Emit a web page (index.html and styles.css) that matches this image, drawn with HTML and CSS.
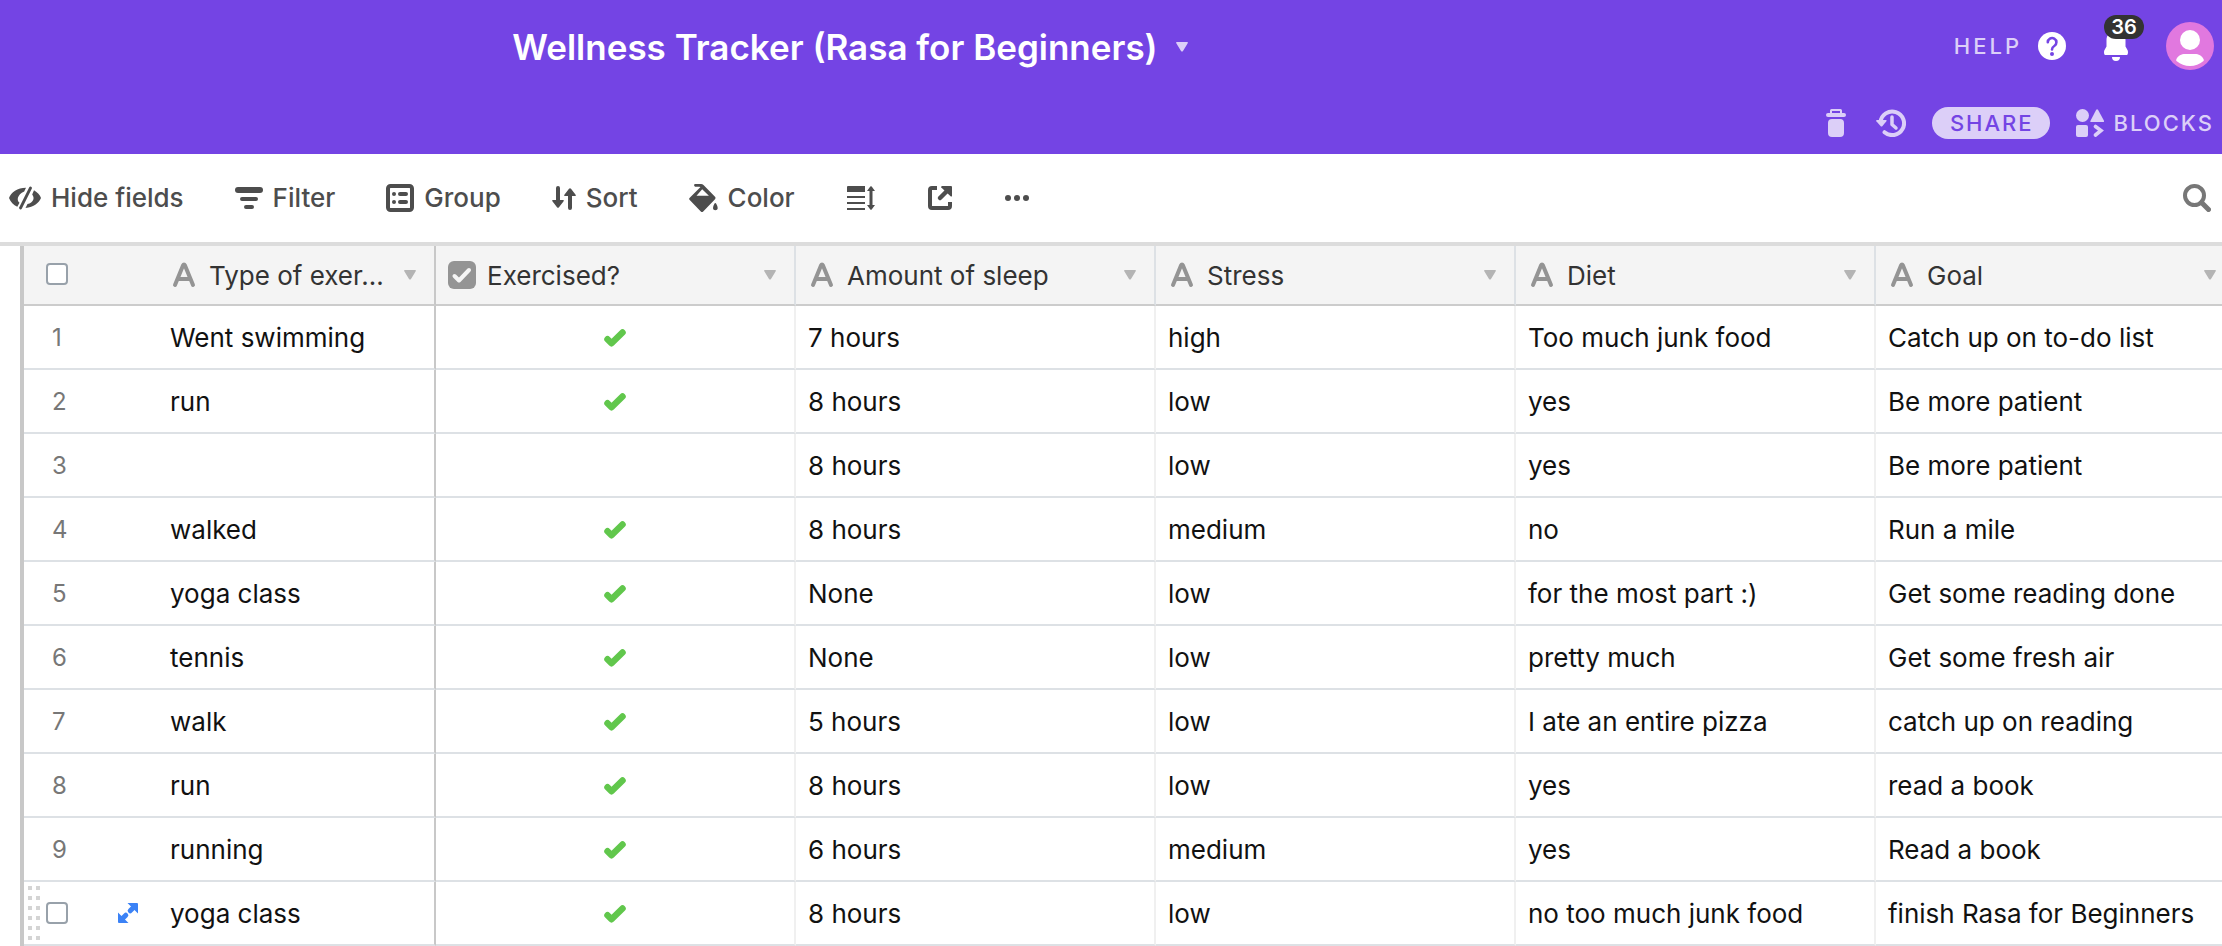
FILE: index.html
```html
<!DOCTYPE html>
<html lang="en">
<head>
<meta charset="utf-8">
<meta name="viewport" content="width=device-width, initial-scale=1">
<title>Wellness Tracker (Rasa for Beginners)</title>
<link rel="stylesheet" href="styles.css">
</head>
<body>
<svg class="sprite" aria-hidden="true">
  <symbol id="text-field" viewBox="0 0 28 26"><path d="M5 23 13 3.500q1-2 2 0L23 23M8.500 17h11" fill="none" stroke="currentColor" stroke-width="4" stroke-linecap="round" stroke-linejoin="round"/></symbol>
  <symbol id="check-field" viewBox="0 0 28 28"><rect width="28" height="28" rx="6" fill="currentColor"/><path d="m6.500 15 4.500 4.500L21 9" fill="none" stroke="#f5f5f5" stroke-width="4" stroke-linecap="round" stroke-linejoin="round"/></symbol>
  <symbol id="caret" viewBox="0 0 12 10"><path d="M1 0h10q1.500 0 .700 1.300L7 9q-1 1.200-2 0L.300 1.300Q-.500 0 1 0Z" fill="currentColor"/></symbol>
  <symbol id="check" viewBox="0 0 22 18"><path d="m3.500 10.300 4 4L18.500 3.500" fill="none" stroke="currentColor" stroke-width="6.500" stroke-linecap="round" stroke-linejoin="round"/></symbol>
</svg>

<header class="topbar">
  <div class="title-area">
    <button class="title" type="button"><h1>Wellness Tracker (Rasa for Beginners)</h1><svg class="caret" width="12" height="10"><use href="#caret"/></svg></button>
  </div>
  <nav class="account" aria-label="Account">
    <a class="help" href="#help">HELP
      <svg width="28" height="28" viewBox="0 0 28 28"><circle cx="14" cy="14" r="14" fill="#fff"/><path d="M9.800 10.300a4.300 4.300 0 1 1 6.500 3.700c-1.600 1-2.300 1.700-2.300 3.500" fill="none" stroke="#7444e4" stroke-width="2.600" stroke-linecap="round"/><circle cx="14" cy="22" r="2" fill="#7444e4"/></svg></a>
    <button class="bell" type="button" aria-label="Notifications">
      <svg width="24" height="30" viewBox="0 0 24 30"><path d="M12 0C6 0 2.500 4 2.500 9v6.500L.500 19c-.900 1.600-.500 5 .700 5h21.600c1.200 0 1.600-3.400.700-5l-2-3.500V9C21.500 4 18 0 12 0ZM8 26h8a4 4 0 0 1-8 0Z" fill="#fff"/></svg>
      <span class="badge">36</span>
    </button>
    <button class="avatar" type="button" aria-label="Profile">
      <svg width="48" height="48" viewBox="0 0 48 48"><circle cx="24" cy="24" r="24" fill="#e178df"/><circle cx="24" cy="18" r="10" fill="#fff"/><path d="M10.300 37.500C12 33.500 15.500 32 19 32h10c3.500 0 7 1.500 8.700 5.500.300.700 0 1.300-.500 1.800C33.500 42.500 29 44 24 44s-9.500-1.500-13.200-4.700c-.500-.500-.800-1.100-.5-1.800Z" fill="#fff"/></svg>
    </button>
  </nav>
  <nav class="base-tools" aria-label="Base tools">
    <button type="button" aria-label="Trash"><svg width="20" height="28" viewBox="0 0 20 28"><path d="M2 4h2V1.500Q4 0 5.500 0h9Q16 0 16 1.500V4h2a2 2 0 0 1 0 4H2a2 2 0 0 1 0-4Zm4 0h8V2H6v2ZM2 14q0-4 4-4h8q4 0 4 4v10q0 4-4 4H6q-4 0-4-4Z" fill="currentColor" fill-rule="evenodd"/></svg></button>
    <button type="button" aria-label="History"><svg width="30" height="28" viewBox="0 0 30 28"><path d="M4.500 13A11.800 11.800 0 1 1 8.500 23.200" fill="none" stroke="currentColor" stroke-width="4" stroke-linecap="round"/><path d="M1 11h9q1 .300.400 1.300L6.500 17q-1 1-2 0L.300 12.300Q-.300 11.300 1 11Z" fill="currentColor"/><path d="M16 8v7.500l4 3.500" fill="none" stroke="currentColor" stroke-width="3.500" stroke-linecap="round" stroke-linejoin="round"/></svg></button>
    <button class="share" type="button">SHARE</button>
    <button class="blocks" type="button"><svg width="28" height="28" viewBox="0 0 28 28"><g fill="currentColor"><circle cx="6.500" cy="6.500" r="6.500"/><path d="M20.200.800q1-1.200 1.800 0l6 11q.500 1.200-.500 1.200H15q-1 0-.500-1.200Z"/><rect y="16" width="12" height="12" rx="2"/></g><path d="m19.500 17.500 5.500 4-5.500 4.500" fill="none" stroke="currentColor" stroke-width="3.600" stroke-linecap="round"/></svg>BLOCKS</button>
  </nav>
</header>

<div class="toolbar" role="toolbar" aria-label="View options">
  <button type="button"><svg width="32" height="24" viewBox="0 0 32 24"><path d="M21.500 2 11.500 22" stroke="currentColor" stroke-width="2.800" stroke-linecap="round"/><path d="M17 1.800C8.500 1.800 2 6.500 0 12c1.500 4 4.500 7 8.300 8.800l2.200-4.100C7.500 14.500 8 9 15.200 5.600ZM25 4.200c3.500 2 6 4.800 7 7.800-2 5-7 9-15.500 10l2-4c6-1.500 7.500-6 4.700-9.600Z" fill="currentColor"/></svg>Hide fields</button>
  <button type="button"><svg width="28" height="22" viewBox="0 0 28 22"><path d="M7 12h14M11 20h6" stroke="currentColor" stroke-width="4" stroke-linecap="round"/><path d="M3 3h22" stroke="currentColor" stroke-width="6" stroke-linecap="round"/></svg>Filter</button>
  <button type="button"><svg width="28" height="28" viewBox="0 0 28 28"><rect x="2" y="2" width="24" height="24" rx="2.500" fill="none" stroke="currentColor" stroke-width="4"/><path d="M14 10h6M14 18h6" stroke="currentColor" stroke-width="4" stroke-linecap="round"/><circle cx="8" cy="10" r="2" fill="currentColor"/><circle cx="8" cy="18" r="2" fill="currentColor"/></svg>Group</button>
  <button type="button"><svg width="24" height="24" viewBox="0 0 24 24"><path d="M6 2v16M18 22V6" stroke="currentColor" stroke-width="4" stroke-linecap="round"/><path d="M.800 14h10.400q1.200 0 .400 1.300L7 21.200q-1 1-2 0L.400 15.300Q-.400 14 .800 14ZM12.800 10h10.400q1.200 0 .400-1.300L19 2.800q-1-1-2 0l-4.600 5.900q-.800 1.300.400 1.300Z" fill="currentColor"/></svg>Sort</button>
  <button type="button"><svg width="29" height="28" viewBox="0 0 29 28"><path d="M.500 14 11.500 3 10.200 2.800H6Q4 .800 6 0h6q1.500 0 2.500 1L26 12.800q1 1.200 0 2.400L14.200 27.400q-1.200 1-2.400 0L.500 15.800Q-.200 14.800.500 14ZM7.500 11.800h12.400L13.200 5.200Z" fill="currentColor" fill-rule="evenodd"/><path d="M25.500 19.500q1-1.200 1.600 0 1.600 2.700 1.600 4.500c0 3-4.700 3-4.700 0q0-1.800 1.500-4.500Z" fill="currentColor"/></svg>Color</button>
  <button class="icon-only" type="button" aria-label="Row height"><svg width="28" height="24" viewBox="0 0 28 24"><path d="M1 0h17v6H0V1q0-1 1-1ZM0 10h18v2H0ZM0 16h18v2H0ZM0 22h18v2H0ZM22.500 5v14H20l3.300 4.500q.7.700 1.400 0L28 19h-2.500V5H28L24.700.500q-.7-.7-1.400 0L20 5Z" fill="currentColor"/></svg></button>
  <button class="icon-only" type="button" aria-label="Share view"><svg width="24" height="24" viewBox="0 0 24 24"><path d="M9 2H4Q2 2 2 4v16q0 2 2 2h16q2 0 2-2v-4" fill="none" stroke="currentColor" stroke-width="4"/><path d="m12 12 7-7" stroke="currentColor" stroke-width="4.500" stroke-linecap="round"/><path d="M14 0h9q1 0 1 1v9q-.500 1-1.400.200L13.300 1.500Q12.800.300 14 0Z" fill="currentColor"/></svg></button>
  <button class="icon-only" type="button" aria-label="More"><svg width="24" height="6" viewBox="0 0 24 6" fill="currentColor"><circle cx="3" cy="3" r="3"/><circle cx="12" cy="3" r="3"/><circle cx="21" cy="3" r="3"/></svg></button>
  <button class="search" type="button" aria-label="Search"><svg width="28" height="28" viewBox="0 0 28 28" fill="none" stroke="currentColor"><circle cx="11.500" cy="11.500" r="9.500" stroke-width="4"/><path d="m18.500 18.500 7 7" stroke-width="5" stroke-linecap="round"/></svg></button>
</div>

<main class="sheet">
<table class="grid">
  <colgroup><col class="c-index"><col class="c-primary"><col class="c-field"><col class="c-field"><col class="c-field"><col class="c-field"><col class="c-field"></colgroup>
  <thead><tr>
    <th class="index"><input type="checkbox" aria-label="Select all rows"></th>
    <th class="primary"><div class="field"><svg width="28" height="26"><use href="#text-field"/></svg><span>Type of exer...</span><button type="button" aria-label="Field menu"><svg class="caret" width="12" height="10"><use href="#caret"/></svg></button></div></th>
    <th><div class="field"><svg width="28" height="28"><use href="#check-field"/></svg><span>Exercised?</span><button type="button" aria-label="Field menu"><svg class="caret" width="12" height="10"><use href="#caret"/></svg></button></div></th>
    <th><div class="field"><svg width="28" height="26"><use href="#text-field"/></svg><span>Amount of sleep</span><button type="button" aria-label="Field menu"><svg class="caret" width="12" height="10"><use href="#caret"/></svg></button></div></th>
    <th><div class="field"><svg width="28" height="26"><use href="#text-field"/></svg><span>Stress</span><button type="button" aria-label="Field menu"><svg class="caret" width="12" height="10"><use href="#caret"/></svg></button></div></th>
    <th><div class="field"><svg width="28" height="26"><use href="#text-field"/></svg><span>Diet</span><button type="button" aria-label="Field menu"><svg class="caret" width="12" height="10"><use href="#caret"/></svg></button></div></th>
    <th><div class="field"><svg width="28" height="26"><use href="#text-field"/></svg><span>Goal</span><button type="button" aria-label="Field menu"><svg class="caret" width="12" height="10"><use href="#caret"/></svg></button></div></th>
  </tr></thead>
  <tbody>
    <tr><td class="index">1</td><td class="primary">Went swimming</td><td class="tick"><svg width="22" height="18"><use href="#check"/></svg></td><td>7 hours</td><td>high</td><td>Too much junk food</td><td>Catch up on to-do list</td></tr>
    <tr><td class="index">2</td><td class="primary">run</td><td class="tick"><svg width="22" height="18"><use href="#check"/></svg></td><td>8 hours</td><td>low</td><td>yes</td><td>Be more patient</td></tr>
    <tr><td class="index">3</td><td class="primary"></td><td class="tick"></td><td>8 hours</td><td>low</td><td>yes</td><td>Be more patient</td></tr>
    <tr><td class="index">4</td><td class="primary">walked</td><td class="tick"><svg width="22" height="18"><use href="#check"/></svg></td><td>8 hours</td><td>medium</td><td>no</td><td>Run a mile</td></tr>
    <tr><td class="index">5</td><td class="primary">yoga class</td><td class="tick"><svg width="22" height="18"><use href="#check"/></svg></td><td>None</td><td>low</td><td>for the most part :)</td><td>Get some reading done</td></tr>
    <tr><td class="index">6</td><td class="primary">tennis</td><td class="tick"><svg width="22" height="18"><use href="#check"/></svg></td><td>None</td><td>low</td><td>pretty much</td><td>Get some fresh air</td></tr>
    <tr><td class="index">7</td><td class="primary">walk</td><td class="tick"><svg width="22" height="18"><use href="#check"/></svg></td><td>5 hours</td><td>low</td><td>I ate an entire pizza</td><td>catch up on reading</td></tr>
    <tr><td class="index">8</td><td class="primary">run</td><td class="tick"><svg width="22" height="18"><use href="#check"/></svg></td><td>8 hours</td><td>low</td><td>yes</td><td>read a book</td></tr>
    <tr><td class="index">9</td><td class="primary">running</td><td class="tick"><svg width="22" height="18"><use href="#check"/></svg></td><td>6 hours</td><td>medium</td><td>yes</td><td>Read a book</td></tr>
    <tr><td class="index"><div class="row-tools"><span class="drag"></span><input type="checkbox" aria-label="Select row 10"><button type="button" aria-label="Expand record"><svg width="20" height="20" viewBox="0 0 20 20"><path d="m4.500 15.500 3.300-3.300M12.200 7.800l3.300-3.300" stroke="currentColor" stroke-width="5" stroke-linecap="round"/><path d="M9.500 0H19q1 0 1 1v9.500ZM10.500 20H1q-1 0-1-1V9.500Z" fill="currentColor"/></svg></button></div></td><td class="primary">yoga class</td><td class="tick"><svg width="22" height="18"><use href="#check"/></svg></td><td>8 hours</td><td>low</td><td>no too much junk food</td><td>finish Rasa for Beginners</td></tr>
  </tbody>
</table>
</main>
</body>
</html>
```
FILE: styles.css
```css
* { box-sizing: border-box; }
body {
  margin: 0;
  background: #fff;
  color: #111;
  font: 26px/32px Inter, "Liberation Sans", sans-serif;
  overflow: hidden;
}
button {
  display: flex;
  align-items: center;
  padding: 0;
  border: 0;
  background: none;
  color: inherit;
  font: inherit;
  cursor: pointer;
}
svg { display: block; flex: none; }
.sprite { position: absolute; width: 0; height: 0; }

/* Purple header */
.topbar {
  display: grid;
  grid-template-columns: 1fr 522px;
  grid-template-rows: 92px 62px;
  align-items: center;
  background: #7444e4;
  color: #dccff8;
}
.title-area { display: flex; justify-content: center; padding-top: 2px; }
.title { gap: 18px; }
.title .caret { color: #dccff8; }
.title h1 {
  margin: 0;
  color: #fff;
  font-size: 35px;
  font-weight: 600;
  line-height: 48px;
  white-space: nowrap;
}
.account, .base-tools {
  display: flex;
  align-items: center;
  justify-content: flex-end;
  padding-right: 8px;
  font-size: 22px;
  font-weight: 500;
}
.account { gap: 38px; letter-spacing: 3px; }
.help {
  display: flex;
  align-items: center;
  gap: 16px;
  color: inherit;
  text-decoration: none;
}
.bell { position: relative; }
.badge {
  position: absolute;
  left: 0;
  bottom: 22px;
  width: 40px;
  height: 24px;
  border-radius: 12px;
  background: #333;
  color: #fff;
  font-size: 20px;
  font-weight: 600;
  line-height: 24px;
  letter-spacing: 0;
  text-align: center;
}
.base-tools {
  grid-column: 2;
  gap: 26px;
  letter-spacing: 2px;
}
.base-tools button { letter-spacing: inherit; }
.base-tools button:first-child { margin-right: 4px; }
.base-tools .share {
  justify-content: center;
  height: 32px;
  padding: 0 16px 0 18px;
  border-radius: 16px;
  background: #dccff8;
  color: #7444e4;
}
.blocks { gap: 10px; }

/* View toolbar */
.toolbar {
  display: flex;
  align-items: center;
  gap: 51px;
  height: 92px;
  padding: 0 11px 0 9px;
  border-bottom: 4px solid #dcdcdc;
  color: #4d4d4d;
  font-weight: 500;
}
.toolbar button { gap: 10px; white-space: nowrap; }
.toolbar .icon-only { padding: 0 1px; }
.toolbar .search { margin-left: auto; color: #777; }

/* Grid */
.sheet { padding-left: 20px; overflow: hidden; }
.grid {
  width: 2216px;
  table-layout: fixed;
  border-collapse: separate;
  border-spacing: 0;
  border-left: 4px solid #c8c8c8;
}
.c-index { width: 134px; }
.c-primary { width: 278px; }
.c-field { width: 360px; }
th {
  height: 60px;
  padding: 0 18px 0 12px;
  border-right: 2px solid #dde1e5;
  border-bottom: 2px solid #ccc;
  background: #f4f4f4;
  color: #333;
  font-weight: 400;
  text-align: left;
}
td {
  height: 64px;
  padding: 2px 12px 0;
  border-right: 2px solid #f0f0f0;
  border-bottom: 2px solid #dde1e5;
  white-space: nowrap;
}
th.primary, td.primary { border-right-color: #c8c8c8; }
th.index, td.index { border-right: 0; }
th.index { padding: 0 0 2px 22px; }
td.index { padding-left: 28px; padding-right: 0; color: #777; font-size: 24px; }
.field { display: flex; align-items: center; }
.field svg { color: #949494; }
.field span {
  flex: 1;
  min-width: 0;
  margin: 0 8px 0 11px;
  padding-top: 2px;
  white-space: nowrap;
}
.field .caret { color: #b4b4b4; }
.tick svg { margin: 0 auto; color: #61c74c; }
input[type="checkbox"] {
  appearance: none;
  display: block;
  width: 22px;
  height: 22px;
  margin: 0;
  border: 2px solid #98a1aa;
  border-radius: 4px;
  background: #fff;
}
td.index:has(.row-tools) { padding: 0 0 0 4px; }
.row-tools { display: flex; align-items: center; }
.drag {
  width: 12px;
  height: 54px;
  margin-right: 6px;
  background: conic-gradient(at 4px 4px, transparent 270deg, #d4d4d4 0) 0 0 / 8px 10px;
}
.row-tools button { margin-left: 50px; color: #3b82f6; }
```
